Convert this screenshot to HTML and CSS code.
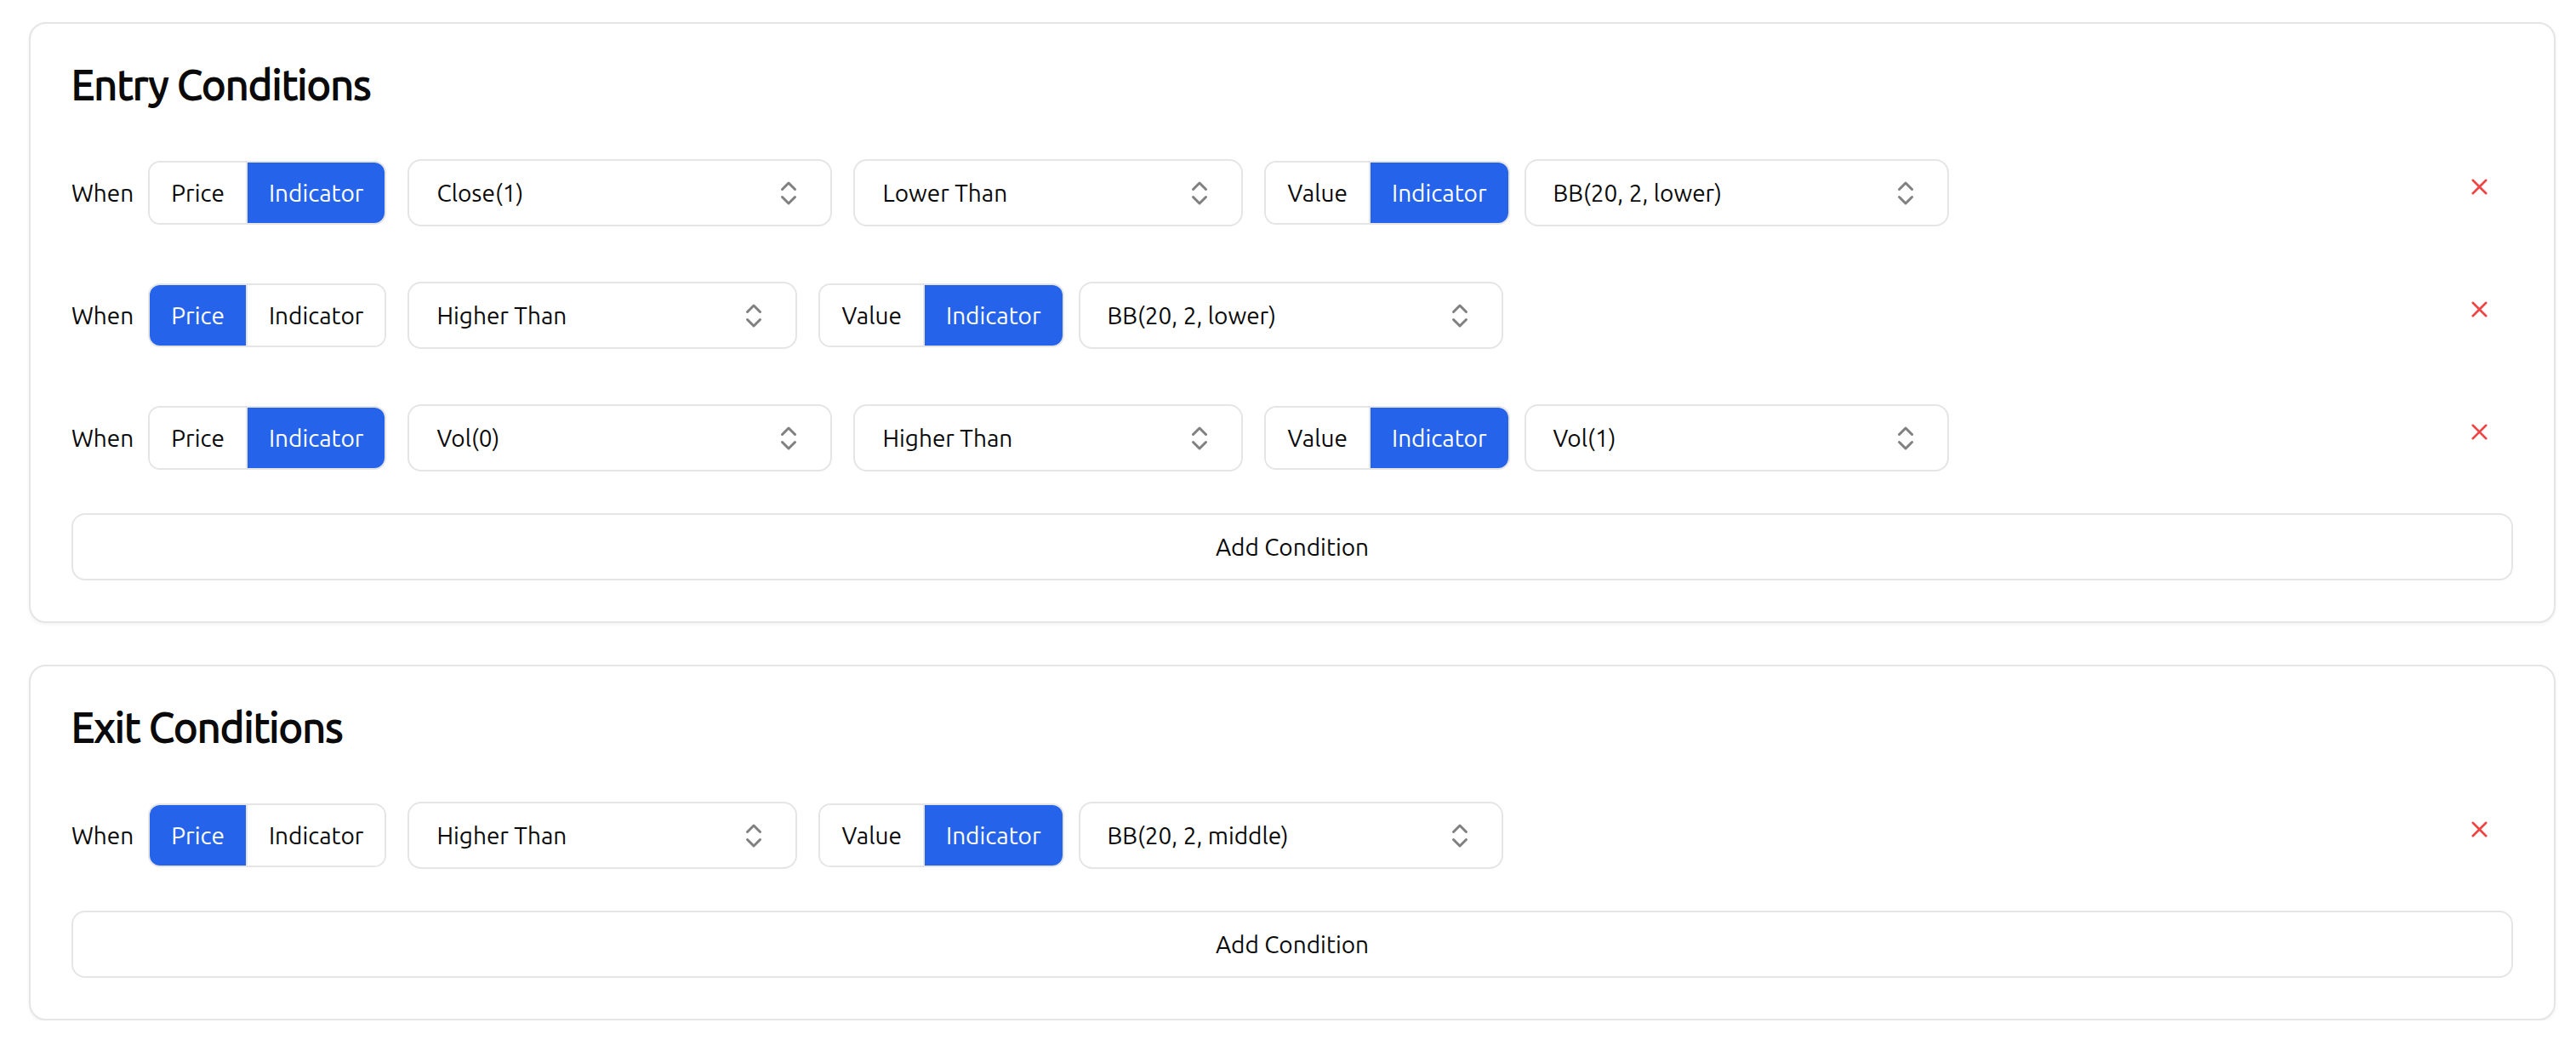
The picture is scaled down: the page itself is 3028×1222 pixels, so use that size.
FILE: index.html
```html
<!DOCTYPE html>
<html lang="en">
<head>
<meta charset="utf-8">
<title>Conditions</title>
<link rel="stylesheet" href="styles.css">
</head>
<body>
<main class="page">
  <section class="card">
    <h2 class="card-title">Entry Conditions</h2>
    <div class="rows">
      <div class="row">
        <div class="group">
          <span class="when">When</span>
          <div class="toggle"><span class="seg">Price</span><span class="seg active">Indicator</span></div>
        </div>
        <div class="select wide"><span>Close(1)</span><svg class="chev" viewBox="0 0 24 24"><path d="m7 15 5 5 5-5"/><path d="m7 9 5-5 5 5"/></svg></div>
        <div class="select"><span>Lower Than</span><svg class="chev" viewBox="0 0 24 24"><path d="m7 15 5 5 5-5"/><path d="m7 9 5-5 5 5"/></svg></div>
        <div class="group">
          <div class="toggle"><span class="seg">Value</span><span class="seg active">Indicator</span></div>
          <div class="select wide"><span>BB(20, 2, lower)</span><svg class="chev" viewBox="0 0 24 24"><path d="m7 15 5 5 5-5"/><path d="m7 9 5-5 5 5"/></svg></div>
        </div>
        <button class="remove" aria-label="Remove"><svg viewBox="0 0 24 24"><path d="M18 6 6 18"/><path d="m6 6 12 12"/></svg></button>
      </div>
      <div class="row">
        <div class="group">
          <span class="when">When</span>
          <div class="toggle"><span class="seg active">Price</span><span class="seg">Indicator</span></div>
        </div>
        <div class="select"><span>Higher Than</span><svg class="chev" viewBox="0 0 24 24"><path d="m7 15 5 5 5-5"/><path d="m7 9 5-5 5 5"/></svg></div>
        <div class="group">
          <div class="toggle"><span class="seg">Value</span><span class="seg active">Indicator</span></div>
          <div class="select wide"><span>BB(20, 2, lower)</span><svg class="chev" viewBox="0 0 24 24"><path d="m7 15 5 5 5-5"/><path d="m7 9 5-5 5 5"/></svg></div>
        </div>
        <button class="remove" aria-label="Remove"><svg viewBox="0 0 24 24"><path d="M18 6 6 18"/><path d="m6 6 12 12"/></svg></button>
      </div>
      <div class="row">
        <div class="group">
          <span class="when">When</span>
          <div class="toggle"><span class="seg">Price</span><span class="seg active">Indicator</span></div>
        </div>
        <div class="select wide"><span>Vol(0)</span><svg class="chev" viewBox="0 0 24 24"><path d="m7 15 5 5 5-5"/><path d="m7 9 5-5 5 5"/></svg></div>
        <div class="select"><span>Higher Than</span><svg class="chev" viewBox="0 0 24 24"><path d="m7 15 5 5 5-5"/><path d="m7 9 5-5 5 5"/></svg></div>
        <div class="group">
          <div class="toggle"><span class="seg">Value</span><span class="seg active">Indicator</span></div>
          <div class="select wide"><span>Vol(1)</span><svg class="chev" viewBox="0 0 24 24"><path d="m7 15 5 5 5-5"/><path d="m7 9 5-5 5 5"/></svg></div>
        </div>
        <button class="remove" aria-label="Remove"><svg viewBox="0 0 24 24"><path d="M18 6 6 18"/><path d="m6 6 12 12"/></svg></button>
      </div>
    </div>
    <button class="add">Add Condition</button>
  </section>

  <section class="card">
    <h2 class="card-title">Exit Conditions</h2>
    <div class="rows">
      <div class="row">
        <div class="group">
          <span class="when">When</span>
          <div class="toggle"><span class="seg active">Price</span><span class="seg">Indicator</span></div>
        </div>
        <div class="select"><span>Higher Than</span><svg class="chev" viewBox="0 0 24 24"><path d="m7 15 5 5 5-5"/><path d="m7 9 5-5 5 5"/></svg></div>
        <div class="group">
          <div class="toggle"><span class="seg">Value</span><span class="seg active">Indicator</span></div>
          <div class="select wide"><span>BB(20, 2, middle)</span><svg class="chev" viewBox="0 0 24 24"><path d="m7 15 5 5 5-5"/><path d="m7 9 5-5 5 5"/></svg></div>
        </div>
        <button class="remove" aria-label="Remove"><svg viewBox="0 0 24 24"><path d="M18 6 6 18"/><path d="m6 6 12 12"/></svg></button>
      </div>
    </div>
    <button class="add">Add Condition</button>
  </section>
</main>
</body>
</html>
```

FILE: styles.css
```css
* { box-sizing: border-box; }

html, body {
  margin: 0;
  padding: 0;
  background: #ffffff;
}

body {
  font-family: Ubuntu, "Noto Sans", sans-serif;
  color: #0a0a0a;
  font-size: 28px;
}

.page {
  padding: 26px 24px 0 34px;
  display: flex;
  flex-direction: column;
  gap: 49px;
}

.card {
  border: 2px solid #e5e5e5;
  border-radius: 20px;
  background: #fff;
  box-shadow: 0 2px 4px rgba(0, 0, 0, 0.05);
  padding: 47px 48px 48px 48px;
}

.card-title {
  margin: 0 0 64px 0;
  font-size: 48px;
  line-height: 48px;
  font-weight: 400;
  letter-spacing: -0.008em;
  -webkit-text-stroke: 1.8px #0a0a0a;
}

.rows {
  display: flex;
  flex-direction: column;
  gap: 65px;
}

.row {
  display: flex;
  align-items: center;
  gap: 25px;
  height: 79px;
}

.group {
  display: flex;
  align-items: center;
  gap: 17px;
}

.when {
  line-height: 1;
}

.toggle {
  display: flex;
  height: 75px;
  border: 2px solid #e5e5e5;
  border-radius: 14px;
  overflow: hidden;
}

.seg {
  display: flex;
  align-items: center;
  justify-content: center;
  padding: 0 25px;
  background: #fff;
  color: #0a0a0a;
}

.seg + .seg {
  border-left: 2px solid #e5e5e5;
}

.seg.active {
  background: #2563eb;
  color: #fff;
}

.select {
  display: flex;
  align-items: center;
  justify-content: space-between;
  width: 458px;
  height: 79px;
  border: 2px solid #e5e5e5;
  border-radius: 16px;
  padding: 0 31px 0 32px;
  background: #fff;
}

.select.wide {
  width: 499px;
}

.chev {
  width: 36px;
  height: 36px;
  fill: none;
  stroke: #808080;
  stroke-width: 2;
  stroke-linecap: round;
  stroke-linejoin: round;
}

.remove {
  margin-left: auto;
  align-self: flex-start;
  width: 80px;
  height: 64px;
  border: 0;
  background: transparent;
  padding: 0;
  display: flex;
  align-items: center;
  justify-content: center;
}

.remove svg {
  width: 31px;
  height: 31px;
  fill: none;
  stroke: #ef4444;
  stroke-width: 2;
  stroke-linecap: round;
  stroke-linejoin: round;
}

.add {
  display: block;
  width: 100%;
  height: 79px;
  margin-top: 49px;
  border: 2px solid #e5e5e5;
  border-radius: 16px;
  background: #fff;
  font-family: inherit;
  font-size: 28px;
  color: #0a0a0a;
}
```
